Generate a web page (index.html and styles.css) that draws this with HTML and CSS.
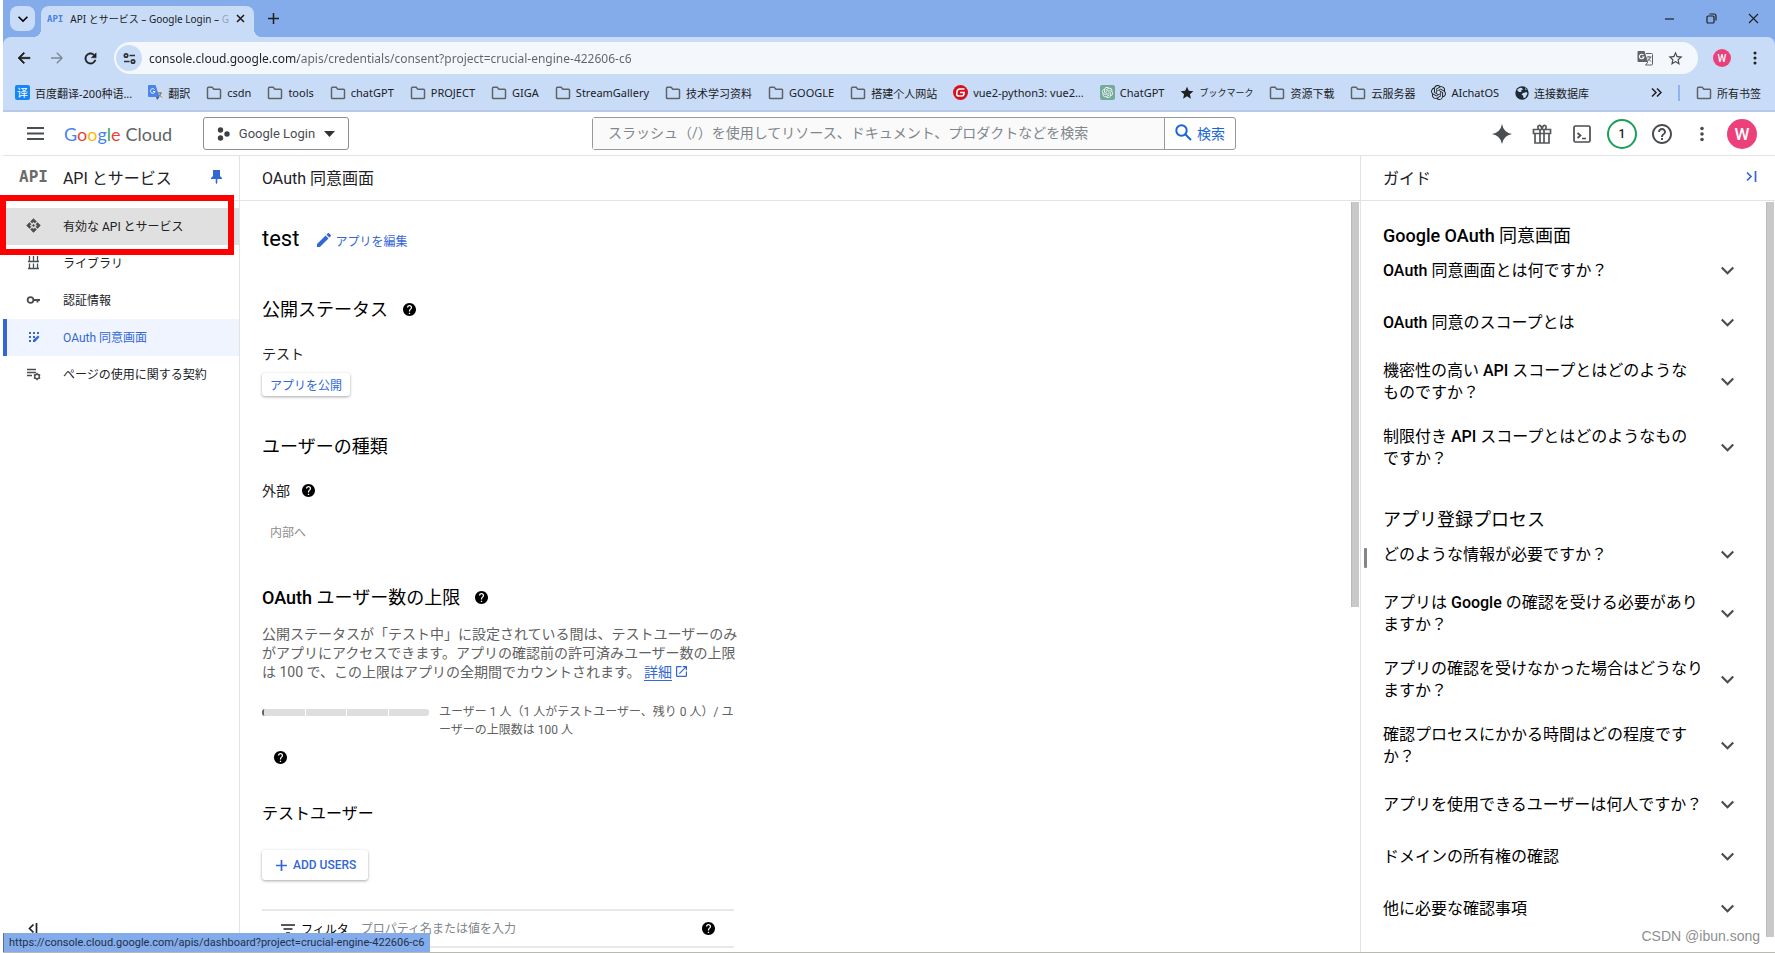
FILE: index.html
```html
<!DOCTYPE html>
<html lang="ja">
<head>
<meta charset="utf-8">
<title>API とサービス – Google Login</title>
<link rel="stylesheet" href="styles.css">
</head>
<body>
<svg class="defs" width="0" height="0" aria-hidden="true">
  <symbol id="folder" viewBox="0 0 16 16"><path d="M1.5 3.2c0-.5.4-.9.9-.9h3.8l1.6 1.9h5.8c.5 0 .9.4.9.9v7.6c0 .5-.4.9-.9.9H2.4c-.5 0-.9-.4-.9-.9z" fill="none" stroke="#5f6368" stroke-width="1.5"/></symbol>
  <symbol id="help" viewBox="2 2 20 20"><path d="M12 2C6.48 2 2 6.48 2 12s4.48 10 10 10 10-4.48 10-10S17.52 2 12 2zm1 17h-2v-2h2v2zm2.07-7.75l-.9.92C13.45 12.9 13 13.5 13 15h-2v-.5c0-1.1.45-2.1 1.17-2.83l1.24-1.26c.37-.36.59-.86.59-1.41 0-1.1-.9-2-2-2s-2 .9-2 2H8c0-2.21 1.79-4 4-4s4 1.79 4 4c0 .88-.36 1.68-.93 2.25z"/></symbol>
  <symbol id="chevron" viewBox="6 6 12 12"><path d="M7.41 8.59L12 13.17l4.59-4.58L18 10l-6 6-6-6z"/></symbol>
  <symbol id="openai" viewBox="0 0 24 24"><path d="M22.2819 9.8211a5.9847 5.9847 0 0 0-.5157-4.9108 6.0462 6.0462 0 0 0-6.5098-2.9A6.0651 6.0651 0 0 0 4.9807 4.1818a5.9847 5.9847 0 0 0-3.9977 2.9 6.0462 6.0462 0 0 0 .7427 7.0966 5.98 5.98 0 0 0 .511 4.9107 6.051 6.051 0 0 0 6.5146 2.9001A5.9847 5.9847 0 0 0 13.2599 24a6.0557 6.0557 0 0 0 5.7718-4.2058 5.9894 5.9894 0 0 0 3.9977-2.9001 6.0557 6.0557 0 0 0-.7475-7.0729zm-9.022 12.6081a4.4755 4.4755 0 0 1-2.8764-1.0408l.1419-.0804 4.7783-2.7582a.7948.7948 0 0 0 .3927-.6813v-6.7369l2.02 1.1686a.071.071 0 0 1 .038.052v5.5826a4.504 4.504 0 0 1-4.4945 4.4944zm-9.6607-4.1254a4.4708 4.4708 0 0 1-.5346-3.0137l.142.0852 4.783 2.7582a.7712.7712 0 0 0 .7806 0l5.8428-3.3685v2.3324a.0804.0804 0 0 1-.0332.0615L9.74 19.9502a4.4992 4.4992 0 0 1-6.1408-1.6464zM2.3408 7.8956a4.485 4.485 0 0 1 2.3655-1.9728V11.6a.7664.7664 0 0 0 .3879.6765l5.8144 3.3543-2.0201 1.1685a.0757.0757 0 0 1-.071 0l-4.8303-2.7865A4.504 4.504 0 0 1 2.3408 7.872zm16.5963 3.8558L13.1038 8.364 15.1192 7.2a.0757.0757 0 0 1 .071 0l4.8303 2.7913a4.4944 4.4944 0 0 1-.6765 8.1042v-5.6772a.79.79 0 0 0-.407-.667zm2.0107-3.0231l-.142-.0852-4.7735-2.7818a.7759.7759 0 0 0-.7854 0L9.409 9.2297V6.8974a.0662.0662 0 0 1 .0284-.0615l4.8303-2.7866a4.4992 4.4992 0 0 1 6.6802 4.66zM8.3065 12.863l-2.02-1.1638a.0804.0804 0 0 1-.038-.0567V6.0742a4.4992 4.4992 0 0 1 7.3757-3.4537l-.142.0805L8.704 5.459a.7948.7948 0 0 0-.3927.6813zm1.0976-2.3654l2.602-1.4998 2.6069 1.4998v2.9994l-2.5974 1.4997-2.6067-1.4997Z"/></symbol>
</svg>

<div class="window">
  <div class="tabstrip">
    <button class="tab-search" aria-label="タブを検索"><svg width="10" height="10"><use href="#chevron"/></svg></button>
    <div class="tab">
      <span class="tab-icon">API</span>
      <span class="tab-title">API とサービス – Google Login – <span class="faded">G</span></span>
      <button class="tab-close" aria-label="閉じる"><svg width="9" height="9" viewBox="0 0 9 9"><path d="M1 1l7 7M8 1l-7 7" stroke="#1f1f1f" stroke-width="1.6"/></svg></button>
    </div>
    <button class="new-tab" aria-label="新しいタブ"><svg width="11" height="11" viewBox="0 0 11 11"><path d="M5.5 0v11M0 5.5h11" stroke="#1f1f1f" stroke-width="1.5"/></svg></button>
    <div class="window-controls">
      <button aria-label="最小化"><svg width="11" height="11" viewBox="0 0 11 11"><path d="M1 6h9" stroke="#1f1f1f" stroke-width="1.2"/></svg></button>
      <button aria-label="元に戻す"><svg width="11" height="11" viewBox="0 0 11 11"><rect x="1" y="3" width="7" height="7" rx="1" fill="none" stroke="#1f1f1f" stroke-width="1.2"/><path d="M3.5 1h4.500q2 0 2 2v4.5" fill="none" stroke="#1f1f1f" stroke-width="1.2"/></svg></button>
      <button aria-label="閉じる"><svg width="11" height="11" viewBox="0 0 11 11"><path d="M1 1l9 9M10 1l-9 9" stroke="#1f1f1f" stroke-width="1.1"/></svg></button>
    </div>
  </div>

  <div class="browser-bars">
    <div class="toolbar">
      <button aria-label="戻る"><svg width="16" height="16" viewBox="0 0 24 24"><path d="M21 11H7l6-6-1.500-1.500L3 12l8.500 8.500L13 19l-6-6h14z" fill="#1f1f1f" stroke="#1f1f1f"/></svg></button>
      <button aria-label="進む"><svg width="16" height="16" viewBox="0 0 24 24"><path d="M3 11h14l-6-6 1.500-1.500L21 12l-8.500 8.500L11 19l6-6H3z" fill="#7b8796"/></svg></button>
      <button aria-label="再読み込み"><svg width="17" height="17" viewBox="0 0 24 24"><path d="M17.65 6.35C16.2 4.9 14.21 4 12 4c-4.42 0-7.99 3.58-7.99 8s3.57 8 7.99 8c3.73 0 6.84-2.55 7.73-6h-2.08c-.82 2.33-3.04 4-5.65 4-3.31 0-6-2.69-6-6s2.69-6 6-6c1.66 0 3.14.69 4.22 1.78L13 11h7V4l-2.35 2.35z" fill="#1f1f1f" stroke="#1f1f1f" stroke-width=".6"/></svg></button>
      <div class="omnibox">
        <button class="site-info" aria-label="サイト情報"><svg width="13" height="13" viewBox="0 0 13 13" fill="none" stroke="#303134" stroke-width="1.7"><circle cx="3" cy="3.5" r="1.7"/><path d="M6.5 3.5H12M1 9.5h5.5"/><circle cx="10" cy="9.5" r="1.7"/></svg></button>
        <input class="url" aria-label="アドレス" value="console.cloud.google.com/apis/credentials/consent?project=crucial-engine-422606-c6">
        <button aria-label="翻訳"><svg width="16" height="16" viewBox="0 0 16 16"><path d="M1.5 1h6l3.500 11H1.500q-1 0-1-1V2q0-1 1-1z" fill="#5f6368"/><path d="M9 3.500h5.500q1 0 1 1v9.500q0 1-1 1H8.500l2.500-3" fill="none" stroke="#5f6368"/><path d="M6.500 5A2.300 2.300 0 1 0 7 7H5" fill="none" stroke="#fff" stroke-width="1.1"/><path d="M10 7h4.500M12 6v1M13.500 7q-1 3-3 4M11 8.500l3 3" fill="none" stroke="#5f6368"/></svg></button>
        <button aria-label="ブックマークに追加"><svg width="17" height="17" viewBox="0 0 24 24" fill="#474747"><path d="M22 9.24l-7.19-.62L12 2 9.19 8.63 2 9.24l5.46 4.73L5.82 21 12 17.27 18.18 21l-1.63-7.03L22 9.24zM12 15.4l-3.76 2.27 1-4.28-3.32-2.88 4.38-.38L12 6.1l1.71 4.04 4.38.38-3.32 2.88 1 4.28L12 15.4z"/></svg></button>
      </div>
      <button class="avatar small" aria-label="プロフィール">W</button>
      <button class="menu" aria-label="メニュー"><svg width="4" height="16" viewBox="0 0 4 16" fill="#1f1f1f"><circle cx="2" cy="3" r="1.5"/><circle cx="2" cy="8" r="1.5"/><circle cx="2" cy="13" r="1.5"/></svg></button>
    </div>
    <nav class="bookmarks" aria-label="ブックマーク">
      <a href="#"><svg width="15" height="15" viewBox="0 0 15 15"><rect width="15" height="15" rx="2" fill="#1487f5"/><text x="2" y="12" font-size="11" fill="#fff" class="cjk">译</text></svg>百度翻译-200种语...</a>
      <a href="#"><svg width="15" height="15" viewBox="0 0 15 15"><rect x="6" y="4" width="9" height="11" rx="1" fill="#d9dce0"/><path d="M1 0h6.500l4 12H1q-1 0-1-1V1q0-1 1-1z" fill="#4a82ee"/><path d="M6.500 4.500A2.300 2.300 0 1 0 7 6.500H5" fill="none" stroke="#fff"/><path d="M9 8h5M12 7v1M13 8q-1 3-3 4M11 9.500l3 3" fill="none" stroke="#6d7580"/><path d="M8 12h3.500L9 15z" fill="#2b5fc4"/></svg>翻訳</a>
      <a href="#"><svg width="16" height="16"><use href="#folder"/></svg>csdn</a>
      <a href="#"><svg width="16" height="16"><use href="#folder"/></svg>tools</a>
      <a href="#"><svg width="16" height="16"><use href="#folder"/></svg>chatGPT</a>
      <a href="#"><svg width="16" height="16"><use href="#folder"/></svg>PROJECT</a>
      <a href="#"><svg width="16" height="16"><use href="#folder"/></svg>GIGA</a>
      <a href="#"><svg width="16" height="16"><use href="#folder"/></svg>StreamGallery</a>
      <a href="#"><svg width="16" height="16"><use href="#folder"/></svg>技术学习资料</a>
      <a href="#"><svg width="16" height="16"><use href="#folder"/></svg>GOOGLE</a>
      <a href="#"><svg width="16" height="16"><use href="#folder"/></svg>搭建个人网站</a>
      <a href="#"><svg width="15" height="15" viewBox="0 0 15 15"><circle cx="7.5" cy="7.5" r="7.5" fill="#d8101c"/><path d="M11.500 4H6.800Q4.500 4 4 6.500L3.700 8.500Q3.500 11 6 11h3q1.500 0 1.800-1.500L11.100 7.500H7" fill="none" stroke="#fff" stroke-width="1.6"/></svg>vue2-python3: vue2...</a>
      <a href="#"><svg width="15" height="15" viewBox="0 0 15 15"><rect width="15" height="15" rx="2" fill="#74aa9c"/><use href="#openai" x="2" y="2" width="11" height="11" fill="#fff"/></svg>ChatGPT</a>
      <a href="#" class="kana"><svg width="14" height="14" viewBox="1 1 22 22" fill="#1f1f1f"><path d="M12 17.27L18.18 21l-1.64-7.03L22 9.24l-7.19-.61L12 2 9.19 8.63 2 9.24l5.46 4.73L5.82 21z"/></svg>ブックマーク</a>
      <a href="#"><svg width="16" height="16"><use href="#folder"/></svg>资源下载</a>
      <a href="#"><svg width="16" height="16"><use href="#folder"/></svg>云服务器</a>
      <a href="#"><svg width="15" height="15" fill="#1f1f1f"><use href="#openai"/></svg>AIchatOS</a>
      <a href="#"><svg width="14" height="14" viewBox="0 0 14 14"><circle cx="7" cy="7" r="6.7" fill="#1f2a36"/><path d="M2 4q3-3 5-2l1 1.500-2 1 .5 1.500H4zM8 7l3.500-1 1 1.500-2 4-2 .5-.5-2.500-1.500-1zM10 2l2 2-2-.5z" fill="#c9dcf7"/></svg>连接数据库</a>
      <button class="more" aria-label="その他のブックマーク"><svg width="11" height="9" viewBox="0 0 11 9"><path d="M1 .5l4 4-4 4M6 .5l4 4-4 4" fill="none" stroke="#1f1f1f" stroke-width="1.5"/></svg></button>
      <span class="divider"></span>
      <a href="#"><svg width="16" height="16"><use href="#folder"/></svg>所有书签</a>
    </nav>
  </div>

  <header class="topbar">
    <button class="hamburger" aria-label="ナビゲーション"><svg width="17" height="13" viewBox="0 0 17 13"><path d="M0 1h17M0 6.500h17M0 12h17" stroke="#4a4d51" stroke-width="1.8"/></svg></button>
    <a class="logo" href="#"><span><span class="g-blue">G</span><span class="g-red">o</span><span class="g-yellow">o</span><span class="g-blue">g</span><span class="g-green">l</span><span class="g-red">e</span></span> <span>Cloud</span></a>
    <button class="project"><svg width="13" height="14" viewBox="0 0 13 14" fill="#3c4043"><circle cx="3.5" cy="3" r="2.7"/><circle cx="3.5" cy="11" r="2.7"/><circle cx="10" cy="7" r="2.7"/></svg>Google Login<svg width="11" height="6" viewBox="0 0 11 6"><path d="M0 0h11L5.500 6z" fill="#303438"/></svg></button>
    <form class="search">
      <input type="search" aria-label="検索" placeholder="スラッシュ（/）を使用してリソース、ドキュメント、プロダクトなどを検索">
      <button type="button"><svg width="17" height="17" viewBox="0 0 17 17" fill="none" stroke="#1a66d8" stroke-width="2"><circle cx="6.5" cy="6.5" r="5.2"/><path d="M10.500 10.500l5.500 5.500"/></svg>検索</button>
    </form>
    <div class="actions">
      <button aria-label="Gemini"><svg width="20" height="20" viewBox="0 0 20 20"><path d="M10 0q1.500 8.500 10 10-8.500 1.500-10 10-1.500-8.500-10-10 8.500-1.500 10-10z" fill="#4a4d51"/></svg></button>
      <button aria-label="ギフト"><svg width="20" height="20" viewBox="0 0 20 20" fill="none" stroke="#55585c" stroke-width="1.7"><path d="M1.500 5.500h17v4h-17zM3 9.500h14V19H3zM8 5.500V19M12 5.500V19M10 5Q9 1 7 1.500 5 2.500 6.500 5M10 5q1-4 3-3.500 2 1 .5 3.500"/></svg></button>
      <button aria-label="Cloud Shell"><svg width="18" height="18" viewBox="0 0 18 18" fill="none" stroke="#4a4d51" stroke-width="1.7"><rect x="1" y="1" width="16" height="16" rx="1.5"/><path d="M4.500 8l3 2.500-3 2.500M9 13.500h4"/></svg></button>
      <button class="count" aria-label="通知">1</button>
      <button aria-label="ヘルプ"><svg width="20" height="20" viewBox="2 2 20 20" fill="#4a4d51"><path d="M11 18h2v-2h-2v2zm1-16C6.48 2 2 6.48 2 12s4.48 10 10 10 10-4.48 10-10S17.52 2 12 2zm0 18c-4.41 0-8-3.59-8-8s3.59-8 8-8 8 3.59 8 8-3.59 8-8 8zm0-14c-2.21 0-4 1.79-4 4h2c0-1.1.9-2 2-2s2 .9 2 2c0 2-3 1.75-3 5h2c0-2.25 3-2.5 3-5 0-2.21-1.79-4-4-4z"/></svg></button>
      <button aria-label="設定"><svg width="4" height="16" viewBox="0 0 4 16" fill="#4a4d51"><circle cx="2" cy="2.5" r="1.8"/><circle cx="2" cy="8" r="1.8"/><circle cx="2" cy="13.5" r="1.8"/></svg></button>
      <button class="avatar" aria-label="アカウント">W</button>
    </div>
  </header>

  <div class="panes">
    <aside class="sidebar">
      <div class="pane-title side-title"><span class="api-mark">API</span><h2>API とサービス</h2><button aria-label="固定"><svg width="11" height="14" viewBox="0 0 11 14" fill="#3367d6"><path d="M2 0h7v6l2 2v1H6.300v4l-.8 1-.8-1V9H0V8l2-2z"/></svg></button></div>
      <nav class="side-nav">
        <a class="hovered" href="#"><svg width="15" height="15" viewBox="0 0 24 24" fill="#4a4d51" stroke="#4a4d51"><path d="M14 12l-2 2-2-2 2-2 2 2zm-2-6l2.120 2.120 2.500-2.500L12 1 7.380 5.620l2.500 2.500L12 6zm-6 6l2.120-2.120-2.500-2.500L1 12l4.620 4.620 2.500-2.500L6 12zm12 0l-2.120 2.120 2.500 2.500L23 12l-4.620-4.620-2.500 2.500L18 12zm-6 6l-2.120-2.120-2.500 2.500L12 23l4.620-4.620-2.500-2.500L12 18z"/></svg>有効な API とサービス</a>
        <a href="#"><svg width="15" height="15" viewBox="0 0 15 15" stroke="#4a4d51" fill="none" stroke-width="1.3"><path d="M2 6.500h11M2 13.500h11M3.500 1v5M7.500 1v5M11.500 1v5M3.500 8.500v5M7.500 8.500v5M11.500 8.500v5"/></svg>ライブラリ</a>
        <a href="#"><svg width="15" height="15" viewBox="0 0 15 15" stroke="#4a4d51" fill="none" stroke-width="1.8"><circle cx="4.5" cy="8" r="2.9"/><path d="M7.500 8H14M11.500 8v2.500"/></svg>認証情報</a>
        <a class="current" href="#"><svg width="15" height="15" viewBox="0 0 15 15" fill="#3367d6"><path d="M3 3h2v2H3zM7 3h2v2H7zM11 3h2v2h-2zM3 7h2v2H3zM7 7h2v2H7zM3 11h2v2H3z"/><path d="M7 13v-2l5-4.500 1.500 1.500L9 13z"/></svg>OAuth 同意画面</a>
        <a href="#"><svg width="15" height="15" viewBox="0 0 15 15" stroke="#4a4d51" fill="none" stroke-width="1.4"><path d="M1 3.500h9M1 6.500h9M1 9.500h5"/><circle cx="11" cy="10.5" r="2.3"/><path d="M11 6.800v1.400M11 12.800v1.400M7.800 8.700l1.200.7M13 11.600l1.200.7M7.800 12.300l1.200-.7M13 9.400l1.200-.7"/></svg>ページの使用に関する契約</a>
      </nav>
      <button class="collapse" aria-label="折りたたむ"><svg width="10" height="11" viewBox="0 0 10 11"><path d="M5.500 1.500l-4 4 4 4M8.500 0v11" fill="none" stroke="#202124" stroke-width="1.7"/></svg></button>
    </aside>

    <main class="content">
      <div class="pane-title"><h1>OAuth 同意画面</h1></div>
      <div class="scroll-area">
        <div class="sheet">
          <div class="app-row"><h2>test</h2><button class="text-button"><svg width="14" height="14" viewBox="3 3 18 18" fill="#3367d6"><path d="M3 17.250V21h3.750L17.810 9.940l-3.750-3.750L3 17.250zM20.710 7.040c.390-.390.390-1.020 0-1.410l-2.340-2.340c-.390-.390-1.020-.390-1.410 0l-1.830 1.830 3.750 3.750 1.830-1.830z"/></svg>アプリを編集</button></div>

          <section class="block status">
            <h3>公開ステータス<svg class="help" width="13" height="13"><use href="#help"/></svg></h3>
            <p class="value">テスト</p>
            <button class="raised">アプリを公開</button>
          </section>

          <section class="block kind">
            <h3>ユーザーの種類</h3>
            <p class="value">外部<svg class="help" width="13" height="13"><use href="#help"/></svg></p>
            <button class="flat" disabled>内部へ</button>
          </section>

          <section class="block cap">
            <h3><span><b>OAuth</b> ユーザー数の上限</span><svg class="help" width="13" height="13"><use href="#help"/></svg></h3>
            <p class="note">公開ステータスが「テスト中」に設定されている間は、テストユーザーのみがアプリにアクセスできます。アプリの確認前の許可済みユーザー数の上限は 100 で、この上限はアプリの全期間でカウントされます。 <a href="#">詳細</a><svg class="external" width="11" height="11" viewBox="3 3 18 18" fill="#3367d6"><path d="M19 19H5V5h7V3H5c-1.110 0-2 .9-2 2v14c0 1.100.890 2 2 2h14c1.100 0 2-.9 2-2v-7h-2v7zM14 3v2h3.590l-9.830 9.830 1.410 1.410L19 6.410V10h2V3h-7z"/></svg></p>
            <div class="usage">
              <div class="bar" role="progressbar" aria-label="ユーザー数" aria-valuenow="1" aria-valuemax="100"><i></i><i></i><i></i><i></i></div>
              <p>ユーザー 1 人（1 人がテストユーザー、残り 0 人）/ ユーザーの上限数は 100 人</p>
            </div>
            <svg class="help lone" width="13" height="13"><use href="#help"/></svg>
          </section>

          <section class="block users">
            <h3>テストユーザー</h3>
            <button class="raised large"><svg width="11" height="11" viewBox="0 0 11 11"><path d="M5.500 0v11M0 5.500h11" stroke="#3367d6" stroke-width="1.7"/></svg>ADD USERS</button>
            <div class="filter">
              <svg width="14" height="10" viewBox="0 0 14 10"><path d="M0 1h14M2.500 5h9M5 9h4" stroke="#202124" stroke-width="1.7"/></svg>
              <label for="filter">フィルタ</label>
              <input id="filter" type="text" placeholder="プロパティ名または値を入力">
              <svg class="help" width="13" height="13"><use href="#help"/></svg>
            </div>
          </section>
        </div>
        <div class="track"><div class="thumb main-thumb"></div></div>
      </div>
    </main>

    <aside class="guide">
      <div class="pane-title"><h2>ガイド</h2><button aria-label="パネルを閉じる"><svg width="11" height="11" viewBox="0 0 11 11"><path d="M1 1.500l4 4-4 4M9.500 0v11" fill="none" stroke="#3367d6" stroke-width="1.7"/></svg></button></div>
      <div class="scroll-area">
        <div class="grip-rail"><span class="grip"></span></div>
        <div class="faq">
          <h3><b>Google OAuth</b> 同意画面</h3>
          <button><span><b>OAuth</b> 同意画面とは何ですか？</span><svg width="13" height="13"><use href="#chevron"/></svg></button>
          <button><span><b>OAuth</b> 同意のスコープとは</span><svg width="13" height="13"><use href="#chevron"/></svg></button>
          <button><span>機密性の高い <b>API</b> スコープとはどのような<br>ものですか？</span><svg width="13" height="13"><use href="#chevron"/></svg></button>
          <button><span>制限付き <b>API</b> スコープとはどのようなもの<br>ですか？</span><svg width="13" height="13"><use href="#chevron"/></svg></button>
          <h3>アプリ登録プロセス</h3>
          <button><span>どのような情報が必要ですか？</span><svg width="13" height="13"><use href="#chevron"/></svg></button>
          <button><span>アプリは <b>Google</b> の確認を受ける必要がありますか？</span><svg width="13" height="13"><use href="#chevron"/></svg></button>
          <button><span>アプリの確認を受けなかった場合はどうなりますか？</span><svg width="13" height="13"><use href="#chevron"/></svg></button>
          <button><span>確認プロセスにかかる時間はどの程度ですか？</span><svg width="13" height="13"><use href="#chevron"/></svg></button>
          <button><span>アプリを使用できるユーザーは何人ですか？</span><svg width="13" height="13"><use href="#chevron"/></svg></button>
          <button><span>ドメインの所有権の確認</span><svg width="13" height="13"><use href="#chevron"/></svg></button>
          <button><span>他に必要な確認事項</span><svg width="13" height="13"><use href="#chevron"/></svg></button>
        </div>
        <div class="track"><div class="thumb guide-thumb"></div></div>
      </div>
    </aside>
  </div>
</div>

<div class="highlight"></div>
<div class="status-bubble">https://console.cloud.google.com/apis/dashboard?project=crucial-engine-422606-c6</div>
<div class="watermark">CSDN @ibun.song</div>
</body>
</html>
```
FILE: styles.css
```css
* { box-sizing: border-box; }

:root {
  --blue: #3367d6;
  --line: #e3e3e3;
  --strip: #85acea;
  --chrome: #c9dcf7;
  --page: Roboto, "Noto Sans CJK JP", sans-serif;
  --ui: "Noto Sans", "Noto Sans CJK SC", sans-serif;
}

body {
  margin: 0;
  height: 100vh;
  overflow: hidden;
  background: #fff;
  color: #202124;
  font-family: var(--page);
  font-size: 14px;
}

h1, h2, h3, p { margin: 0; font-weight: 400; }
b { font-weight: 500; }
a { color: inherit; text-decoration: none; }
svg { display: block; flex: none; }
.defs { position: absolute; }
.cjk { font-family: "Noto Sans CJK SC", sans-serif; }

button, input {
  margin: 0;
  padding: 0;
  border: 0;
  background: none;
  font: inherit;
  color: inherit;
}
button { display: flex; align-items: center; justify-content: center; }
input:focus { outline: none; }

.window {
  display: flex;
  flex-direction: column;
  height: 100vh;
  margin-left: 3px;
  border-bottom: 1px solid #b9b9b4;
  background: linear-gradient(var(--strip) 60px, #fff 60px);
}

/* Browser frame */
.tabstrip {
  display: flex;
  align-items: center;
  height: 37px;
  padding: 6px 0 0 7px;
  font-family: var(--ui);
}
.tab-search {
  width: 25px;
  height: 25px;
  margin: 0 6px 6px 0;
  border-radius: 8px;
  background: var(--chrome);
}
.tab {
  position: relative;
  display: flex;
  align-items: center;
  gap: 7px;
  width: 213px;
  height: 31px;
  padding: 0 10px 6px 6px;
  border-radius: 8px 8px 0 0;
  background: var(--chrome);
}
.tab::before, .tab::after {
  content: "";
  position: absolute;
  bottom: 0;
  width: 8px;
  height: 8px;
}
.tab::before { left: -8px; background: radial-gradient(circle at 0 0, transparent 8px, var(--chrome) 8px); }
.tab::after { right: -8px; background: radial-gradient(circle at 100% 0, transparent 8px, var(--chrome) 8px); }
.tab-icon { font: bold 9px "DejaVu Sans Mono", monospace; color: #4c7fe8; }
.tab-title { flex: 1; white-space: nowrap; font-size: 10px; }
.faded { color: #93a5c2; }
.new-tab { width: 38px; margin-bottom: 6px; }
.window-controls { display: flex; gap: 31px; margin: 0 16px 6px auto; }

.browser-bars {
  border-radius: 8px 8px 0 0;
  background: var(--chrome);
  border-bottom: 2px solid #b7c9e6;
  font-family: var(--ui);
}
.toolbar { display: flex; align-items: center; height: 42px; padding: 0 18px 0 13px; gap: 17px; }
.omnibox {
  display: flex;
  flex: 1;
  align-items: center;
  gap: 14px;
  height: 32px;
  margin-left: -2px;
  padding: 0 14px 0 2px;
  border-radius: 16px;
  background: #f4f8fd;
}
.site-info { width: 26px; height: 26px; border-radius: 13px; background: var(--chrome); }
.url {
  flex: 1;
  margin-left: -7px;
  font-size: 12px;
  background: linear-gradient(90deg, #202124 149px, #5f6368 149px);
  background-clip: text;
  -webkit-background-clip: text;
  color: transparent;
}
.avatar {
  width: 30px;
  height: 30px;
  border-radius: 50%;
  background: #ec407a;
  color: #fff;
  font: 500 17px Roboto, sans-serif;
}
.avatar.small { width: 18px; height: 18px; margin: 0 7px 0 -2px; font-size: 10px; }
.menu { margin-left: -2px; }

.bookmarks {
  display: flex;
  align-items: center;
  gap: 16px;
  height: 31px;
  padding: 0 14px 4px 12px;
  font-size: 11px;
  white-space: nowrap;
}
.bookmarks a { display: flex; align-items: center; gap: 5px; }
.bookmarks .kana { font-size: 9px; }
.more { margin-left: auto; }
.divider { width: 2px; height: 16px; background: #8fb3ee; }

/* Console header */
.topbar {
  display: flex;
  align-items: center;
  height: 44px;
  padding: 0 18px 0 24px;
  border-bottom: 1px solid var(--line);
  background: #fff;
}
.logo { display: flex; gap: 5px; width: 139px; margin-left: 20px; font: 18px Lato, sans-serif; color: #5f6368; }
.g-blue { color: #4285f4; }
.g-red { color: #ea4335; }
.g-yellow { color: #fbbc04; }
.g-green { color: #34a853; }
.project {
  gap: 9px;
  width: 146px;
  height: 33px;
  border: 1px solid #8a8d91;
  border-radius: 3px;
  font-size: 13px;
  color: #4a4d51;
}
.search { display: flex; flex: 0 1 644px; height: 33px; margin-left: 243px; border: 1px solid #96999d; border-radius: 3px; }
.search input { flex: 1; min-width: 0; padding: 0 15px 1px; background: #fafafa; border-right: 1px solid #96999d; font-size: 14px; }
.search input::placeholder, .filter input::placeholder { color: #80868b; opacity: 1; }
.search button { gap: 5px; width: 70px; padding-bottom: 2px; color: #1a66d8; }
.actions { display: flex; align-items: center; gap: 10px; margin-left: auto; }
.actions button { width: 30px; height: 30px; }
.actions .count { border: 2px solid #1e9d58; border-radius: 50%; font-size: 12px; font-weight: 500; }

/* Panes */
.panes { display: flex; flex: 1; min-height: 0; }
.pane-title {
  display: flex;
  align-items: center;
  justify-content: space-between;
  flex: none;
  height: 45px;
  padding: 0 18px 3px 22px;
  border-bottom: 1px solid var(--line);
}
.pane-title h1, .pane-title h2 { font-size: 16px; }
.scroll-area { display: flex; flex: 1; min-height: 0; }
.track { flex: none; width: 9px; padding-top: 1px; }
.thumb { width: 8px; background: #c9c9c9; border-left: 1px solid #bababa; }
.main-thumb { height: 54%; }
.guide-thumb { height: 98%; }

.sidebar { display: flex; flex-direction: column; flex: none; width: 237px; border-right: 1px solid var(--line); }
.side-title { padding: 0 17px 3px 16px; }
.side-title h2 { flex: 1; margin-left: 15px; }
.api-mark { font: bold 16px "DejaVu Sans Mono", monospace; color: #6b6b6b; }
.side-nav { padding-top: 7px; }
.side-nav a { display: flex; align-items: center; gap: 22px; height: 37px; padding: 0 0 2px 23px; font-size: 12px; }
.side-nav .hovered { background: #e0e0e0; }
.side-nav .current { padding-left: 19px; border-left: 4px solid var(--blue); background: #eff4fe; color: var(--blue); }
.collapse { margin: auto auto 18px 25px; }

.content { display: flex; flex-direction: column; flex: 1; min-width: 0; }
.sheet { flex: 1; overflow: hidden; padding: 21px 22px 0; }
.app-row { display: flex; align-items: center; gap: 18px; height: 32px; }
.app-row h2 { font-size: 22px; color: #000; }
.text-button { gap: 4px; padding-top: 4px; font-size: 12px; color: var(--blue); }
.block h3 { display: flex; align-items: center; gap: 15px; height: 24px; font-size: 18px; color: #000; }
.block h3 .help { margin-top: 3px; }
.status { margin-top: 42px; }
.value { display: flex; align-items: center; gap: 12px; height: 20px; margin-top: 23px; }
.raised {
  height: 23px;
  margin-top: 10px;
  padding: 0 8px;
  border-radius: 3px;
  box-shadow: 0 1px 3px rgba(0, 0, 0, .35);
  font-size: 12px;
  color: var(--blue);
}
.raised.large { gap: 6px; height: 30px; margin-top: 26px; padding: 0 12px 0 14px; font-weight: 500; }
.kind { margin-top: 37px; }
.flat { height: 20px; margin-top: 21px; padding: 0 8px; font-size: 12px; color: #8c8c8c; }
.cap { margin-top: 43px; }
.note { width: 477px; margin-top: 17px; line-height: 19px; color: #616161; }
.note a { color: var(--blue); border-bottom: 1px solid var(--blue); }
.external { display: inline-block; margin-left: 4px; }
.usage { display: flex; align-items: flex-start; gap: 10px; width: 474px; margin-top: 21px; }
.usage p { flex: 1; font-size: 12px; line-height: 18px; color: #616161; line-break: anywhere; }
.bar { display: flex; gap: 1px; width: 167px; height: 7px; margin-top: 6px; overflow: hidden; border-radius: 3px; border-left: 2px solid #5f6368; }
.bar i { flex: 1; background: #dedede; }
.lone { margin: 12px 0 0 12px; }
.users { margin-top: 36px; }
.users h3 { font-size: 16px; }
.filter { display: flex; align-items: center; gap: 6px; width: 472px; height: 39px; margin-top: 29px; padding: 0 19px; border-top: 2px solid #e8e8e8; border-bottom: 2px solid #e8e8e8; }
.filter label { font-size: 12px; color: #000; }
.filter input { flex: 1; margin-left: 6px; font-size: 12px; }

.guide { display: flex; flex-direction: column; flex: none; width: 415px; border-left: 1px solid var(--line); }
.grip-rail { display: flex; align-items: center; flex: none; width: 22px; padding: 0 0 38px 3px; }
.grip { width: 3px; height: 20px; border-radius: 1px; background: #80868b; }
.faq { flex: 1; overflow: hidden; padding: 26px 32px 0 0; color: #000; }
.faq h3 { font-size: 18px; line-height: 18px; }
.faq button + h3 { margin-top: 30px; }
.faq button { justify-content: space-between; gap: 15px; width: 100%; min-height: 52px; padding: 11px 0; font-size: 16px; line-height: 22px; text-align: left; }
.faq button svg { margin-bottom: 2px; fill: #4a4d51; }

/* Overlays */
.highlight { position: absolute; left: 0; top: 195px; width: 234px; height: 60px; border: 6px solid #f00; }
.status-bubble {
  position: absolute;
  left: 3px;
  bottom: 1px;
  height: 19px;
  padding: 0 6px 0 5px;
  background: var(--strip);
  border-left: 1px solid #5f6f8c;
  font: 11px/20px Roboto, sans-serif;
  color: #20304a;
}
.watermark { position: absolute; right: 15px; bottom: 8px; font: 14px/18px "Liberation Sans", sans-serif; color: #8f8f8f; }
```
